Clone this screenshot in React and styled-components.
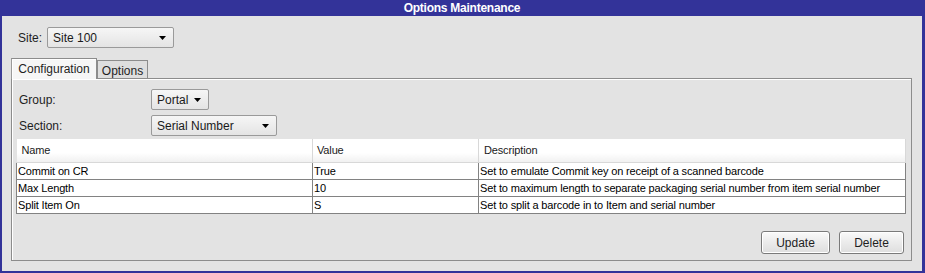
import React from 'react';
import styled, { createGlobalStyle } from 'styled-components';

const Global = createGlobalStyle`
  html, body { margin: 0; padding: 0; background: #fff; }
  * { box-sizing: border-box; }
`;

const Frame = styled.div`
  width: 925px;
  height: 273px;
  background: #333399;
  display: flex;
  flex-direction: column;
  padding: 0 3px 2px 2px;
  font-family: "Liberation Sans", Arial, sans-serif;
`;

const TitleBar = styled.div`
  height: 16px;
  line-height: 16px;
  text-align: center;
  color: #fff;
  font-weight: bold;
  font-size: 12px;
  letter-spacing: -0.25px;
`;

const Body = styled.div`
  flex: 1;
  background: #e3e3e3;
  padding: 11px 10px 10px 9px;
  display: flex;
  flex-direction: column;
`;

const SiteRow = styled.div`
  display: flex;
  align-items: center;
  height: 21px;
  padding-left: 7px;
`;

const Label = styled.span`
  width: ${p => p.$w}px;
  flex: none;
  font-size: 12px;
  color: #1e1e1e;
`;

const Select = styled.div`
  width: ${p => p.$w}px;
  height: 21px;
  border: 1px solid #9a9a9a;
  border-radius: 2px;
  background: linear-gradient(#f6f6f6, #e4e4e4);
  display: flex;
  align-items: center;
  justify-content: space-between;
  padding: 0 7px 0 5px;
  font-size: 12px;
  color: #1a1a1a;
`;

const Arrow = () => (
  <svg width="7" height="4" viewBox="0 0 7 4"><path d="M0 0H7L3.5 4Z" fill="#000" /></svg>
);

const TabStrip = styled.div`
  display: flex;
  align-items: flex-end;
  height: 21px;
  margin-top: 9px;
`;

const Tab = styled.div`
  width: ${p => p.$w}px;
  height: ${p => (p.$active ? 21 : 18)}px;
  border: 1px solid #8c8c8c;
  border-bottom: none;
  border-left-color: ${p => (p.$active ? '#9a9a9a' : '#8c8c8c')};
  background: ${p => (p.$active ? '#f6f6f6' : '#dedede')};
  font-size: 12px;
  color: #1e1e1e;
  display: flex;
  align-items: center;
  justify-content: center;
  padding-top: ${p => (p.$active ? 0 : 2)}px;
  position: relative;
  z-index: ${p => (p.$active ? 1 : 0)};
  margin-bottom: ${p => (p.$active ? -1 : 0)}px;
  box-shadow: ${p => (p.$active ? 'inset 1px 1px 0 #fff' : 'none')};
`;

const Panel = styled.div`
  flex: 1;
  border: 1px solid #8c8c8c;
  box-shadow: inset 1px 1px 0 #fff;
  display: flex;
  flex-direction: column;
  padding: 10px 5px 6px 4px;
`;

const FormGrid = styled.div`
  display: grid;
  grid-template-columns: 132px auto;
  row-gap: 5px;
  justify-items: start;
  align-items: center;
  padding-left: 3px;
`;

const Table = styled.table`
  margin-top: 3px;
  width: 890px;
  table-layout: fixed;
  border-collapse: collapse;
  font-size: 11px;
  letter-spacing: -0.15px;
  color: #000;
`;

const HeadCell = styled.th`
  height: 23px;
  padding: 0 0 0 ${p => p.$pad}px;
  text-align: left;
  font-weight: normal;
  color: #1a1a1a;
  background: linear-gradient(#ffffff, #ffffff 60%, #f1f1f1);
  border-right: 1px solid #d8d8d8;
  border-bottom: 1px solid #d8d8d8;
`;

const Cell = styled.td`
  height: 17px;
  padding: 0 0 0 1px;
  background: #fff;
  border: 1px solid #828282;
  white-space: nowrap;
  overflow: hidden;
`;

const Spacer = styled.div`
  flex: 1;
`;

const ButtonRow = styled.div`
  display: flex;
  justify-content: flex-end;
  gap: 9px;
  padding-right: 2px;
`;

const Button = styled.button`
  width: ${p => p.$w}px;
  height: 23px;
  border: 1px solid #7a7a7a;
  border-radius: 3px;
  background: linear-gradient(#fafafa, #ebebeb 50%, #dedede);
  box-shadow: inset 0 0 0 1px #fff;
  font-family: "Liberation Sans", Arial, sans-serif;
  font-size: 12px;
  color: #1e1e1e;
  padding: 0;
`;

const rows = [
  ['Commit on CR', 'True', 'Set to emulate Commit key on receipt of a scanned barcode'],
  ['Max Length', '10', 'Set to maximum length to separate packaging serial number from item serial number'],
  ['Split Item On', 'S', 'Set to split a barcode in to Item and serial number'],
];

export default function App() {
  return (
    <>
      <Global />
      <Frame>
        <TitleBar>Options Maintenance</TitleBar>
        <Body>
          <SiteRow>
            <Label $w={29}>Site:</Label>
            <Select $w={127}>Site 100<Arrow /></Select>
          </SiteRow>
          <TabStrip>
            <Tab $w={86} $active>Configuration</Tab>
            <Tab $w={51}>Options</Tab>
          </TabStrip>
          <Panel>
            <FormGrid>
              <Label>Group:</Label>
              <Select $w={58}>Portal<Arrow /></Select>
              <Label>Section:</Label>
              <Select $w={126}>Serial Number<Arrow /></Select>
            </FormGrid>
            <Table>
              <colgroup>
                <col style={{ width: 296 }} />
                <col style={{ width: 166 }} />
                <col />
              </colgroup>
              <thead>
                <tr>
                  <HeadCell $pad={5}>Name</HeadCell>
                  <HeadCell $pad={4}>Value</HeadCell>
                  <HeadCell $pad={5}>Description</HeadCell>
                </tr>
              </thead>
              <tbody>
                {rows.map(r => (
                  <tr key={r[0]}>
                    {r.map((c, i) => <Cell key={i}>{c}</Cell>)}
                  </tr>
                ))}
              </tbody>
            </Table>
            <Spacer />
            <ButtonRow>
              <Button $w={69}>Update</Button>
              <Button $w={65}>Delete</Button>
            </ButtonRow>
          </Panel>
        </Body>
      </Frame>
    </>
  );
}
